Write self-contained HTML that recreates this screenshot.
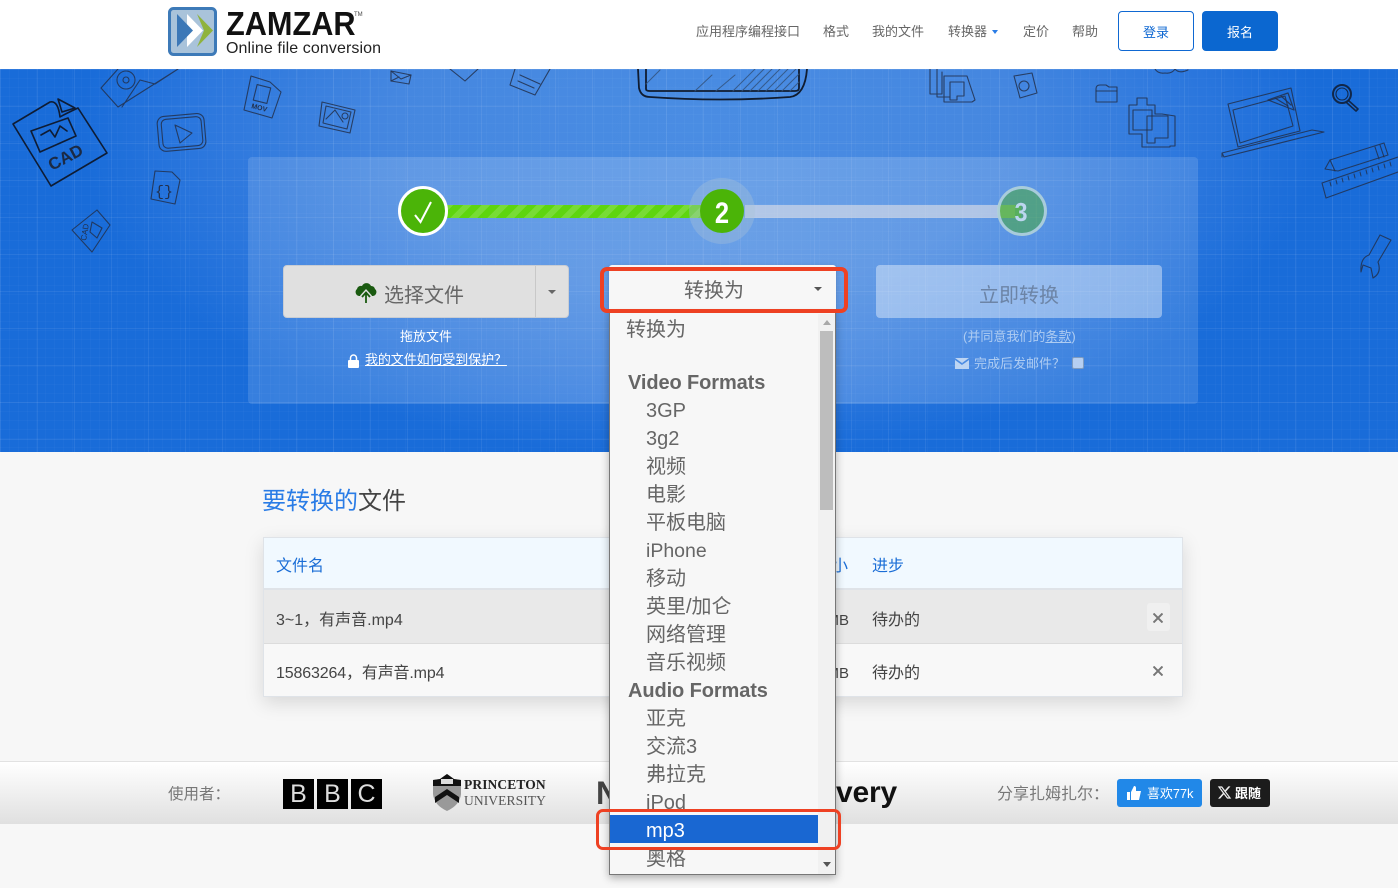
<!DOCTYPE html>
<html lang="zh"><head><meta charset="utf-8"><title>Zamzar</title>
<style>
*{box-sizing:border-box}
html,body{margin:0;padding:0}
body{width:1398px;height:888px;overflow:hidden;position:relative;background:#f7f7f7;font-family:"Liberation Sans","Noto Sans CJK SC",sans-serif;color:#555}
.a{position:absolute;white-space:nowrap}
.nav{top:23px;font-size:13px;line-height:18px;color:#666}
#hero{left:0;top:69px;width:1398px;height:383px;overflow:hidden;background:radial-gradient(ellipse 620px 330px at 700px 60px,#4a8de3 0%,#4587e0 50%,#2a76dd 82%,#196cd9 100%);background-color:#196cd9}
#grid{left:0;top:0;width:1398px;height:383px;background-image:linear-gradient(rgba(255,255,255,.07) 1px,transparent 1px),linear-gradient(90deg,rgba(255,255,255,.07) 1px,transparent 1px),linear-gradient(rgba(255,255,255,.025) 1px,transparent 1px),linear-gradient(90deg,rgba(255,255,255,.025) 1px,transparent 1px);background-size:37px 37px,37px 37px,9px 9px,9px 9px}
#panel{left:248px;top:157px;width:950px;height:247px;border-radius:4px;background:linear-gradient(90deg,rgba(255,255,255,.13),rgba(255,255,255,.19) 50%,rgba(255,255,255,.12))}
.btn{border-radius:4px;text-align:center}
.opt{left:646px;font-size:20px;line-height:28px;color:#666}
.grp{left:628px;font-size:20px;line-height:28px;color:#666;font-weight:bold;letter-spacing:-.1px}
.th{font-size:16px;line-height:20px;color:#1a6dd6}
.td{font-size:16px;line-height:20px;color:#444}
</style></head>
<body>
<!-- header -->
<div class="a" style="left:0;top:0;width:1398px;height:69px;background:#fff"></div>
<svg class="a" style="left:168px;top:7px" width="50" height="49" viewBox="0 0 50 49">
<rect x="1.5" y="1.5" width="46" height="46" rx="4" fill="#a9c3da" stroke="#3d7ab8" stroke-width="3"/>
<path d="M19 7L35 23.500 19 40Z" fill="#fff"/><path d="M9 7L25 23.500 9 40Z" fill="#3c78b7"/><path d="M29 7L45 23.500 29 40 36 23.500Z" fill="#8fb33d"/>
</svg>
<div class="a" style="left:226px;top:5px;font-size:33px;line-height:38px;font-weight:bold;color:#111;transform:scaleX(.93);transform-origin:0 0">ZAMZAR</div>
<div class="a" style="left:354px;top:11px;font-size:6px;line-height:8px;color:#444">TM</div>
<div class="a" style="left:226px;top:39px;font-size:16px;line-height:20px;color:#222;letter-spacing:.1px">Online file conversion</div>
<div class="a nav" style="left:696px">应用程序编程接口</div>
<div class="a nav" style="left:823px">格式</div>
<div class="a nav" style="left:872px">我的文件</div>
<div class="a nav" style="left:948px">转换器</div>
<div class="a" style="left:992px;top:30px;border:3px solid transparent;border-top:4px solid #2a7ce6"></div>
<div class="a nav" style="left:1023px">定价</div>
<div class="a nav" style="left:1072px">帮助</div>
<div class="a btn" style="left:1118px;top:11px;width:76px;height:40px;border:1px solid #0f68d2;background:#fff;color:#0f68d2;font-size:13px;line-height:42px">登录</div>
<div class="a btn" style="left:1202px;top:11px;width:76px;height:40px;background:#0b67d0;color:#fff;font-size:13px;line-height:43px">报名</div>

<!-- hero -->
<div class="a" id="hero"><div class="a" id="grid"></div>
<svg class="a" style="left:0;top:0" width="1398" height="383" viewBox="0 69 1398 383" fill="none" stroke="#22304c" stroke-width="1.1" stroke-linejoin="round" stroke-linecap="round" stroke-opacity=".85">
<!-- CAD file -->
<g stroke="#0e1c34" stroke-width="1.6" stroke-opacity="1"><path d="M13 124L50 102Q58 100 60 117Q65 114 78 108L107 153 51 186Z"/><path d="M58 99L75 108 62 112Z"/><path d="M31 131L68 118 76 136 40 152Z"/><path d="M41 135L50 130 55 137 60 126 67 131"/></g>
<text x="0" y="0" transform="translate(52 171) rotate(-28)" font-family="Liberation Sans" font-weight="bold" font-size="17" fill="#1b2a44" stroke="none">CAD</text>
<!-- disk -->
<path d="M101 88L118 69M178 69L118 107 101 88M178 69L155 84 140 80 122 107"/><circle cx="126" cy="80" r="9"/><circle cx="126" cy="80" r="3"/>
<!-- play -->
<rect x="158" y="115" width="47" height="35" rx="7" transform="rotate(-5 181 132)"/><rect x="162" y="118" width="40" height="29" rx="5" transform="rotate(-5 181 132)"/><path d="M175 125L192 133 180 143Z"/>
<!-- braces file -->
<path d="M155 171L172 172 180 180 175 204 151 199Z"/><text x="155" y="196" font-family="Liberation Mono" font-size="15" fill="#22304c" stroke="none">{}</text>
<!-- cad small -->
<path d="M72 230L97 210 110 225 92 252Z"/><text transform="translate(86 241) rotate(-80)" font-family="Liberation Sans" font-size="8" fill="#22304c" stroke="none">CAD</text><path d="M92 222L102 228 97 238 90 232Z"/>
<!-- mov -->
<path d="M251 76L270 82 281 92 272 118 244 110Z"/><rect x="255" y="86" width="14" height="16" transform="rotate(14 262 94)"/><text transform="translate(251 108) rotate(14)" font-family="Liberation Sans" font-weight="bold" font-size="7" fill="#22304c" stroke="none">MOV</text>
<!-- image -->
<path d="M322 102L355 110 350 133 319 126Z"/><path d="M326 106L351 112 347 129 323 123Z"/><path d="M326 119L335 110 343 122"/><circle cx="345" cy="116" r="3"/>
<!-- mail -->
<path d="M391 71L411 75 409 84 391 81Z"/><path d="M391 71L401 79 411 75M391 81L399 77"/>
<path d="M450 69L465 81 478 69M515 69L510 85 535 95 550 69M520 75L540 84M518 81L534 88"/>
<!-- tablet -->
<g stroke="#101c30" stroke-width="1.8" stroke-opacity="1"><path d="M638 69L639 88Q641 97 650 97 720 102 790 97 805 95 807 69"/><path d="M646 69V89Q646 91 650 91H795Q799 91 799 88V69"/></g>
<g stroke="#33527c" stroke-width="1"><path d="M646 84L660 70M695 91L712 75M716 91L735 75M733 91L755 69M742 91L764 69M750 91L772 69M758 91L780 69M766 91L788 69M774 91L796 69M782 91L799 74M790 91L799 82"/></g>
<!-- files -->
<path d="M930 69V94H942V72M937 69V97H950M944 76H967L975 100 972 102H944Z"/><path d="M950 82H964V96H957V100H950Z"/>
<path d="M1014 76L1032 73 1037 93 1020 98Z"/><circle cx="1024" cy="86" r="5"/>
<path d="M1096 89Q1096 85 1100 85H1106L1109 87H1117V102H1096Z"/><path d="M1096 91H1117"/>
<path d="M1155 69Q1158 74 1165 73 1172 74 1175 69M1175 69Q1179 74 1188 70"/>
<!-- clipboard -->
<path d="M1129 105H1137V98H1147V105H1155V114H1162L1175 116V146H1170V147H1142V134H1129Z"/><path d="M1133 110H1152V130H1133Z"/><path d="M1147 116H1168V138H1155V143H1147Z"/>
<!-- laptop -->
<path d="M1228 104L1291 88 1300 131 1238 147Z"/><path d="M1233 110L1285 96 1293 126 1240 143Z"/><path d="M1222 153L1312 130 1324 132 1224 157ZM1222 153V157"/><path d="M1268 100L1288 93 1294 110ZM1275 98L1288 106M1281 96L1291 105" stroke-width="1.2"/>
<!-- magnifier -->
<circle cx="1342" cy="94" r="9" stroke="#0f1b30" stroke-width="2"/><circle cx="1342" cy="94" r="6" stroke="#0f1b30"/><path d="M1349 101L1358 109 1356 111 1347 103" stroke="#0f1b30" stroke-width="1.6"/>
<!-- pencil -->
<path d="M1330 160L1384 143 1388 155 1338 171 1325 169Z"/><path d="M1380 145L1384 157M1375 147L1379 159M1330 160L1335 171"/>
<!-- ruler -->
<path d="M1322 183L1398 157M1326 198L1398 172M1322 183L1326 198"/><path d="M1330 182l1 4M1336 180l1 4M1342 178l1 4M1348 176l1 4M1354 174l1 4M1360 172l1 4M1366 170l1 4M1372 168l1 4M1378 166l1 4M1384 164l1 4M1390 162l1 4" stroke-width="1"/>
<!-- wrench -->
<path d="M1380 235L1391 240 1378 262Q1382 273 1373 278L1371 268 1363 265 1361 272Q1360 258 1369 255Z"/>
</svg>
</div>
<div class="a" id="panel"></div>

<!-- progress -->
<div class="a" style="left:445px;top:205px;width:257px;height:13px;background:#5ed50f;background-image:repeating-linear-gradient(135deg,rgba(255,255,255,.16) 0 6px,transparent 6px 13px)"></div>
<div class="a" style="left:745px;top:205px;width:270px;height:13px;background:rgba(225,225,230,.62)"></div>
<div class="a" style="left:998px;top:205px;width:23px;height:13px;background:rgba(110,200,70,.6);z-index:3"></div>
<div class="a" style="left:398px;top:186px;width:50px;height:50px;border-radius:50%;background:#4bb408;border:3px solid #fff"></div>
<svg class="a" style="left:412px;top:200px" width="22" height="25" viewBox="0 0 22 25" fill="none"><path d="M3 15L8.500 22 19 2" stroke="#fff" stroke-width="2"/></svg>
<div class="a" style="left:689px;top:178px;width:66px;height:66px;border-radius:50%;background:rgba(170,195,215,.36)"></div>
<div class="a" style="left:700px;top:189px;width:44px;height:44px;border-radius:50%;background:#4bb408"></div>
<div class="a" style="left:700px;top:191px;width:44px;color:#fff;font-size:30px;font-weight:bold;line-height:46px;text-align:center;transform:scaleX(.85)">2</div>
<div class="a" style="left:997px;top:186px;width:50px;height:50px;border-radius:50%;background:rgba(75,170,60,.55);border:3px solid rgba(190,215,240,.8);z-index:4"></div>
<div class="a" style="left:997px;top:189px;width:48px;color:#bcd6ef;font-size:26px;font-weight:bold;line-height:46px;text-align:center;z-index:4;transform:scaleX(.9)">3</div>

<!-- choose -->
<div class="a" style="left:283px;top:265px;width:286px;height:53px;border-radius:4px;background:#e0e0e0;border:1px solid #c9cdd3"></div>
<div class="a" style="left:535px;top:266px;width:1px;height:51px;background:#c8c8c8"></div>
<div class="a" style="left:548px;top:290px;border:4px solid transparent;border-top:4px solid #666"></div>
<svg class="a" style="left:355px;top:281px" width="22" height="22" viewBox="0 0 22 22"><path d="M4 15A4 4 0 0 1 2 8 4 4 0 0 1 7 5 5 5 0 0 1 16 5 4 4 0 0 1 20 8 4 4 0 0 1 18 15Z" fill="#1a5a10"/><path d="M11 22V12M6.500 16L11 11 15.500 16" stroke="#e0e0e0" stroke-width="4" fill="none"/><path d="M11 22V12M7 16L11 11.500 15 16" stroke="#1a5a10" stroke-width="1.800" fill="none"/></svg>
<div class="a" style="left:384px;top:282px;font-size:20px;line-height:28px;color:#666">选择文件</div>
<div class="a" style="left:400px;top:328px;font-size:13px;line-height:18px;color:#fff">拖放文件</div>
<svg class="a" style="left:347px;top:354px" width="13" height="14" viewBox="0 0 13 14"><rect x="1" y="6" width="11" height="8" rx="1" fill="#fff"/><path d="M3.500 6V4a3 3 0 0 1 6 0V6" fill="none" stroke="#fff" stroke-width="1.500"/></svg>
<div class="a" style="left:365px;top:351px;font-size:13px;line-height:18px;color:#fff;text-decoration:underline;letter-spacing:-.1px">我的文件如何受到保护？</div>

<!-- convert now -->
<div class="a btn" style="left:876px;top:265px;width:286px;height:53px;background:rgba(255,255,255,.4);color:#6c84a6;font-size:20px;line-height:63px">立即转换</div>
<div class="a" style="left:963px;top:328px;font-size:13px;line-height:18px;color:#aeccf2">(并同意我们的<span style="text-decoration:underline">条款</span>)</div>
<svg class="a" style="left:955px;top:358px" width="14" height="11" viewBox="0 0 14 11"><path d="M0 0H14L7 5Z M0 2L7 7 14 2V11H0Z" fill="#bdd5f3"/></svg>
<div class="a" style="left:974px;top:355px;font-size:13px;line-height:18px;color:#aeccf2">完成后发邮件？</div>
<div class="a" style="left:1072px;top:357px;width:12px;height:12px;border-radius:2px;background:#b5cff2;border:1px solid #7f9cc0"></div>

<!-- files section -->
<div class="a" style="left:262px;top:486px;font-size:24px;line-height:32px;color:#2a7ce6">要转换的<span style="color:#444">文件</span></div>
<div class="a" style="left:263px;top:537px;width:920px;height:160px;background:#f8f8f8;border:1px solid #dfe3e8;box-shadow:0 6px 18px rgba(0,0,0,.13)"></div>
<div class="a" style="left:264px;top:538px;width:918px;height:52px;background:#f1f9ff;border-bottom:2px solid #dfe3e8"></div>
<div class="a" style="left:264px;top:590px;width:918px;height:54px;background:#e9e9e9;border-bottom:1px solid #dcdcdc"></div>
<div class="a th" style="left:276px;top:557px">文件名</div>
<div class="a th" style="left:836px;top:557px;width:12px;overflow:hidden;direction:rtl">小</div>
<div class="a th" style="left:872px;top:557px">进步</div>
<div class="a td" style="left:276px;top:611px">3~1，有声音.mp4</div>
<div class="a td" style="left:276px;top:664px;letter-spacing:-.15px">15863264，有声音.mp4</div>
<div class="a td" style="left:836px;top:611px;width:13px;overflow:hidden;direction:rtl;font-size:15px">MB</div>
<div class="a td" style="left:836px;top:664px;width:13px;overflow:hidden;direction:rtl;font-size:15px">MB</div>
<div class="a td" style="left:872px;top:611px">待办的</div>
<div class="a td" style="left:872px;top:664px">待办的</div>
<div class="a" style="left:1147px;top:603px;width:23px;height:28px;border-radius:3px;background:#f0f0f0"></div>
<svg class="a" style="left:1153px;top:613px" width="10" height="10" viewBox="0 0 10 10"><path d="M.5 .5L9.500 9.500M9.500 .5L.5 9.500" stroke="#777" stroke-width="2"/></svg>
<svg class="a" style="left:1153px;top:666px" width="10" height="10" viewBox="0 0 10 10"><path d="M.5 .5L9.500 9.500M9.500 .5L.5 9.500" stroke="#777" stroke-width="2"/></svg>

<!-- users band -->
<div class="a" style="left:0;top:761px;width:1398px;height:63px;background:linear-gradient(#fff,#e0e0e0);border-top:1px solid #e2e2e2"></div>
<div class="a" style="left:168px;top:785px;font-size:15.500px;line-height:20px;color:#777">使用者：</div>
<div class="a" style="left:283px;top:779px;width:31px;height:30px;background:#000;color:#ddd;font-size:25px;line-height:30px;text-align:center">B</div>
<div class="a" style="left:317px;top:779px;width:31px;height:30px;background:#000;color:#ddd;font-size:25px;line-height:30px;text-align:center">B</div>
<div class="a" style="left:351px;top:779px;width:31px;height:30px;background:#000;color:#ddd;font-size:25px;line-height:30px;text-align:center">C</div>
<svg class="a" style="left:433px;top:774px" width="28" height="38" viewBox="0 0 28 38"><path d="M0 6L7 5 14 0 21 5 28 6V20Q27 31 14 37 1 31 0 20Z" fill="#999"/><path d="M0 6L7 5 14 0 21 5 28 6V12H0Z" fill="#111"/><path d="M2 23L14 15 26 23V29L14 21 2 29Z" fill="#111"/><rect x="8" y="5" width="12" height="5" fill="#ddd"/></svg>
<div class="a" style="left:464px;top:777px;font-family:'Liberation Serif',serif;font-size:13.500px;line-height:16px;color:#222;font-weight:bold;letter-spacing:.1px">PRINCETON</div>
<div class="a" style="left:464px;top:793px;font-family:'Liberation Serif',serif;font-size:13.500px;line-height:16px;color:#555;letter-spacing:.1px">UNIVERSITY</div>
<div class="a" style="left:596px;top:775px;font-size:32px;line-height:36px;font-weight:bold;color:#444;width:14px;overflow:hidden">N</div>
<div class="a" style="left:836px;top:775px;font-size:30px;line-height:36px;font-weight:bold;color:#111;letter-spacing:-.2px">very</div>
<div class="a" style="left:997px;top:785px;font-size:16px;line-height:20px;color:#777">分享扎姆扎尔：</div>
<div class="a" style="left:1117px;top:779px;width:85px;height:28px;border-radius:3px;background:#2188e8"></div>
<svg class="a" style="left:1126px;top:785px" width="16" height="16" viewBox="0 0 16 16"><path d="M1 7H4V15H1ZM5 7L8 1Q10 1 10 3V6H15L13 15H5Z" fill="#fff"/></svg>
<div class="a" style="left:1147px;top:786px;font-size:13px;line-height:16px;color:#fff;letter-spacing:-.1px">喜欢77k</div>
<div class="a" style="left:1210px;top:779px;width:60px;height:28px;border-radius:3px;background:#1c1c1c"></div>
<svg class="a" style="left:1217px;top:785px" width="15" height="15" viewBox="0 0 24 24"><path fill="#eee" d="M18.244 2.250h3.308l-7.227 8.260 8.502 11.240H16.170l-5.214-6.817L4.990 21.750H1.680l7.730-8.835L1.254 2.250H8.080l4.713 6.231zm-1.161 17.520h1.833L7.084 4.126H5.117z"/></svg>
<div class="a" style="left:1235px;top:786px;font-size:13px;line-height:16px;color:#fff;font-weight:bold">跟随</div>

<!-- select + dropdown -->
<div class="a" style="left:609px;top:265px;width:227px;height:50px;background:#f7f7f7;border-radius:3px 3px 0 0;box-shadow:0 2px 6px rgba(0,0,0,.2)"></div>
<div class="a" style="left:684px;top:277px;font-size:20px;line-height:28px;color:#666">转换为</div>
<div class="a" style="left:814px;top:287px;border:4px solid transparent;border-top:4px solid #555"></div>
<div class="a" style="left:609px;top:313px;width:227px;height:562px;background:#f7f7f7;border:1px solid #777;border-top:0;box-shadow:0 3px 8px rgba(0,0,0,.3)"></div>
<div class="a" style="left:818px;top:314px;width:17px;height:560px;background:#f1f1f1"></div>
<div class="a" style="left:820px;top:331px;width:13px;height:179px;background:#bdbdbd"></div>
<div class="a" style="left:823px;top:320px;border:4px solid transparent;border-top:0;border-bottom:5px solid #a8a8a8"></div>
<div class="a" style="left:823px;top:862px;border:4px solid transparent;border-bottom:0;border-top:5px solid #555"></div>
<div class="a opt" style="left:626px;top:316px">转换为</div>
<div class="a grp" style="top:369px">Video Formats</div>
<div class="a opt" style="top:397px">3GP</div>
<div class="a opt" style="top:425px">3g2</div>
<div class="a opt" style="top:453px">视频</div>
<div class="a opt" style="top:481px">电影</div>
<div class="a opt" style="top:509px">平板电脑</div>
<div class="a opt" style="top:537px;font-size:19.500px">iPhone</div>
<div class="a opt" style="top:565px">移动</div>
<div class="a opt" style="top:593px">英里/加仑</div>
<div class="a opt" style="top:621px">网络管理</div>
<div class="a opt" style="top:649px">音乐视频</div>
<div class="a grp" style="top:677px">Audio Formats</div>
<div class="a opt" style="top:705px">亚克</div>
<div class="a opt" style="top:733px">交流3</div>
<div class="a opt" style="top:761px">弗拉克</div>
<div class="a opt" style="top:789px">iPod</div>
<div class="a" style="left:610px;top:815px;width:208px;height:28px;background:#1967d2"></div>
<div class="a opt" style="top:817px;color:#fff">mp3</div>
<div class="a opt" style="top:845px">奥格</div>

<!-- red highlights -->
<div class="a" style="left:600px;top:267px;width:248px;height:46px;border:4px solid #ee4123;border-radius:7px"></div>
<div class="a" style="left:596px;top:809px;width:245px;height:41px;border:3px solid #ee4123;border-radius:7px"></div>
</body></html>
